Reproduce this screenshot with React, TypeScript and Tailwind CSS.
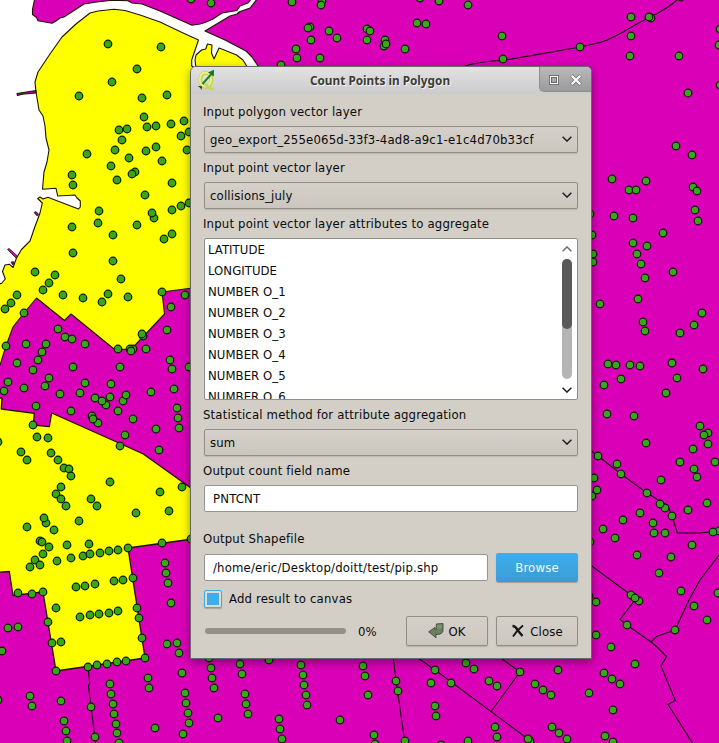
import React from "react";

type Point = [number, number];

const collisions: Point[] = [
  // north-west shore
  [108,44],[161,47],[137,69],[112,82],[79,96],[142,98],[167,95],[144,117],[119,130],[127,129],[147,127],[156,126],
  [171,124],[184,121],[189,132],[181,136],[122,140],[115,150],[146,151],[156,147],[187,150],[87,154],[129,158],
  [111,166],[162,161],[135,172],[132,174],[72,175],[73,185],[117,180],[172,183],[191,-1],
  [145,195],[99,211],[154,218],[152,213],[172,210],[189,203],[181,206],[98,223],[72,227],[137,225],[113,235],[172,234],
  [164,239],[73,253],[113,261],[35,272],[55,275],[49,283],[43,290],[121,279],[17,295],[11,303],[5,309],[63,295],
  [83,298],[108,294],[102,302],[128,297],[162,292],[185,295],[171,307],[24,313],[167,330],[58,329],[65,337],[72,339],
  [85,344],[143,336],[142,334],[118,349],[133,349],[130,349],[131,351],[146,349],[6,346],[26,344],[46,344],[42,352],
  [38,360],[17,363],[33,370],[73,367],[120,367],[170,360],[172,369],[189,367],
  // west
  [8,382],[4,391],[24,388],[49,378],[45,386],[60,394],[85,383],[80,393],[111,384],[110,397],[123,401],[126,395],
  [95,398],[106,405],[102,401],[118,411],[151,392],[174,389],[36,406],[71,411],[92,416],[98,423],[93,419],[133,419],
  [156,429],[177,408],[178,418],[179,428],[125,435],[120,446],[159,450],[33,425],[37,437],[48,438],[-2,442],[21,452],
  [27,460],[51,453],[58,460],[64,468],[69,469],[71,476],[56,494],[61,487],[61,499],[66,506],[110,482],[91,499],
  [97,506],[160,492],[182,487],[136,513],[169,511],[46,523],[44,518],[27,527],[54,530],[79,521],[40,541],[42,542],
  [49,547],[67,545],[89,544],[162,543],[191,539],
  // south-west
  [43,554],[35,560],[40,565],[30,567],[57,561],[71,558],[83,556],[90,554],[100,553],[109,551],[118,550],[128,548],
  [18,593],[32,594],[43,592],[76,587],[85,586],[95,584],[114,581],[123,580],[133,578],[165,563],[166,573],[168,583],
  [171,603],[56,608],[80,617],[90,615],[99,614],[109,613],[118,611],[137,608],[139,618],[142,638],[48,622],[8,628],
  [18,627],[2,651],[52,643],[61,642],[145,658],[56,671],[88,667],[97,665],[107,664],[117,662],[126,661],[167,644],
  [177,643],[179,653],[182,673],[110,684],[111,694],[113,704],[114,714],[116,724],[117,733],[119,743],[148,678],
  [149,688],[185,693],[186,703],[188,713],[189,723],[183,734],[155,728],[30,696],[32,706],[61,701],[64,721],[66,731],
  [67,741],[-2,700],[91,707],[95,737],
  // north
  [211,3],[292,2],[322,1],[321,5],[310,27],[308,28],[329,31],[337,38],[311,40],[296,49],[297,58],[320,58],[281,65],
  [367,29],[370,31],[367,40],[385,40],[384,46],[386,44],[405,49],[417,23],[426,24],[420,-2],[439,1],
  // north-east
  [468,5],[502,36],[503,59],[580,47],[631,17],[651,18],[649,17],[631,36],[630,56],[679,56],[681,-3],[720,29],
  [719,45],[688,93],[720,85],[676,146],[692,155],[612,179],[629,190],[636,190],[646,181],[693,187],[697,191],[695,210],
  // east
  [614,216],[633,218],[698,221],[663,233],[633,243],[647,246],[637,254],[641,264],[645,278],[673,272],[638,299],
  [600,304],[643,322],[645,331],[702,313],[694,325],[680,333],[608,364],[616,365],[630,365],[640,366],[621,379],
  [604,385],[672,363],[677,378],[703,369],[666,393],[607,414],[634,416],[700,426],[708,433],[704,435],[590,214],
  [592,235],[593,254],[593,262],
  // south-east
  [708,444],[693,449],[646,443],[598,456],[617,464],[621,474],[680,462],[715,462],[694,469],[697,477],[661,480],
  [594,478],[592,496],[597,490],[647,493],[665,508],[660,504],[672,516],[707,503],[688,510],[640,513],[623,520],
  [653,523],[603,529],[615,538],[654,533],[665,533],[719,531],[713,532],[692,545],[590,542],[637,555],[671,557],
  [659,573],[681,591],[718,593],[694,606],[707,620],[631,595],[639,601],[635,598],[589,596],[596,602],[627,625],
  [675,630],[596,635],[611,647],[635,664],[604,673],[612,679],[620,684],[589,693],[613,710],[605,736],[613,742],
  // south
  [209,658],[211,668],[212,678],[214,688],[240,664],[242,674],[245,694],[246,704],[248,714],[218,718],[269,660],
  [301,665],[303,675],[304,685],[306,695],[307,705],[279,719],[280,729],[282,739],[363,666],[365,676],[368,695],
  [340,720],[374,735],[375,744],[396,681],[398,691],[405,741],[435,670],[431,683],[451,683],[435,706],[436,716],
  [466,663],[474,669],[489,681],[497,686],[520,672],[558,670],[535,684],[543,690],[551,695],[495,727],[497,737],
  [530,741],[528,739],[552,727],[559,733],[567,739],[468,741],[441,745],
];

const water =
  "M-5,-5 L34.5,-5 L34.5,0 L32.5,9 L32.5,14.5 L36.5,17.5 L38,20.8 L52,23.2 L56,21 L60,18 L64,17 L84,4 L95,2.3 L112,0.3 L128,0.7 L132,3 L142,4 L160,11 L192,25.3 L200,24 L205,22.5 L213,19 L222,13 L237,10.5 L240,6 L248,3 L252,-2 L258,-2 L250,8 L239,12 L237,14 L230,16 L205,31 L225,40 L246,51 L252,57 L258,66 L258,72 L190,72 L100,210 L20,290 L-5,290 Z";

const shore =
  "M198.5,40 L182,32.5 L160,22 L140,15 L125,10.5 L114,9.2 L98,11 L90,13 L76,24 L62,37 L50,54 L38,72 L35,82 L36,92 L39,110 L43,116 L45,126 L46,138 L49,150 L47,162 L44,172 L42.5,189.3 L56,188.3 L57.7,196 L75,195 L77,198 L80.3,201 L80.3,207 L78.5,209 L55,200 L48,197.3 L43,199 L40,197 L37.7,198.5 L42.3,203 L40,213 L35,226.5 L30,241 L21.5,249.5 L16.5,258 L13,267.5 L9.5,264.3 L5,265 L2.5,271.5 L5.3,279 L1.5,283.5 L-5,284 L-5,370 L0,365 L6,346 L13,327 L24,313 L36.5,298 L64.5,320.5 L71,314 L114,349 L131,349.5 L164.5,314 L162,292 L200,287 L200,72 L191.7,66 L191.7,60 Z";

const inlet =
  "M196,68 L195,60 L196,55 L201.5,50 L205.7,49 L207.5,44 L212,45 L211.5,53 L214,59 L219,48 L223,49.5 L236.5,55 L243,60 L249,70 Z";

const southwest =
  "M-5,398 L2,398 L1.3,409 L34.3,413.3 L33.3,425 L49.3,426.7 L51.7,413 L120,443.5 L143.3,454 L200,494.5 L200,538 L128,548 L145,658 L56,671 L43,592 L13,595.5 L9.3,571.5 L-5,572.5 Z";

const boundaries = [
  "M88,667 L89.7,683 L88.5,686 L91,707 L95.7,743",
  "M393.3,658 L396,681 L405,743",
  "M418,658 L435,670 L528,739",
  "M502,659 L520,672 L491,711.5",
  "M585,446 L598,456 L621,474 L647,493 L668,506 L672,516 L677.3,533 L700,533 L719,531",
  "M585,561 L631,595 L635,600 L620,619.5 L627,625 L651,642 L657,647 L666.5,656.5 L661,666 L675.3,700.5 L668,704.5 L692.5,743",
  "M719,555 L700,580 L690,598 L675,630 L656.5,636.5 L651,642",
  "M462,67 Q480,61 503,60.5 L580,47 L600,42.5 Q610,40 635,25 L650,17 Q667,9 677,0",
];

function MapCanvas() {
  return (
    <svg className="block" width="719" height="743" viewBox="0 0 719 743">
      <rect width="719" height="743" fill="#da00b7" />
      <g stroke="#1a1500" strokeWidth="1.1" strokeLinejoin="round">
        <path d={water} fill="#fff" />
        <path d={shore} fill="#ff0" />
        <path d={inlet} fill="#ff0" />
        <path d={southwest} fill="#ff0" strokeWidth="1.3" />
        <path d="M17,93.5 L36,90.5 L36,93 L22,94.2 L17.5,95.5 Z" fill="#b4009a" />
        <path d="M7.5,249.5 L9,248.5 L17.5,256 L16,258 Z" fill="#da00b7" strokeWidth="0.8" />
        <path d="M34,212.5 L36,211.5 L39,214.5 L37,216 Z" fill="#90007a" strokeWidth="0.6" />
        <path d="M11,262 L13.5,261.5 L14.5,264 L12.5,265 Z" fill="#90007a" strokeWidth="0.6" />
      </g>
      <g fill="none" stroke="#19000f" strokeWidth="1.15">
        {boundaries.map((d) => (
          <path key={d} d={d} />
        ))}
      </g>
      <g fill="#38a81a" stroke="#0b1a05" strokeWidth="1.2">
        {collisions.map(([x, y]) => (
          <circle key={`${x},${y}`} cx={x} cy={y} r="3.8" />
        ))}
      </g>
    </svg>
  );
}

function Chevron({ up = false, color = "#1a1a1a" }: { up?: boolean; color?: string }) {
  return (
    <svg width="10" height="6" viewBox="0 0 10 6" fill="none" stroke={color} strokeWidth="1.4">
      <path d={up ? "M0.6,5.2 L5,0.9 L9.4,5.2" : "M0.6,0.8 L5,5.1 L9.4,0.8"} />
    </svg>
  );
}

function Label({ children }: { children: React.ReactNode }) {
  return <div className="-ml-[1px] flex h-[29px] items-center">{children}</div>;
}

function Combo({ value }: { value: string }) {
  return (
    <div className="flex h-[27px] w-[374px] items-center justify-between rounded-[2px] border border-[#918e86] bg-linear-to-b from-[#d5d0c9] to-[#cbc6be] pr-[5px] pl-[5px] shadow-[0_1px_1px_rgba(0,0,0,0.12)]">
      <span>{value}</span>
      <div className="pb-[2px]">
        <Chevron />
      </div>
    </div>
  );
}

function Logo() {
  return (
    <svg width="20" height="22" viewBox="0 0 20 22">
      <ellipse cx="8.8" cy="10.8" rx="5.6" ry="7" fill="#dfe3bd" stroke="#c3d052" strokeWidth="4" />
      <ellipse cx="8.4" cy="10.4" rx="5.6" ry="7" fill="none" stroke="#eaf08e" strokeWidth="2" />
      <path d="M8.5,14.5 Q11.5,20 16.5,20" fill="none" stroke="#c9d65a" strokeWidth="2.8" />
      <path d="M5.5,15 L14,5.5" stroke="#1c7f30" strokeWidth="1.9" />
      <path d="M17,0.8 L16.8,7.4 L11,3.4 Z" fill="#127426" />
      <path d="M0.6,17 L5,17.2 L4.5,21 L3.2,18.8 Z" fill="#12401c" />
    </svg>
  );
}

const attributes = [
  "LATITUDE", "LONGITUDE", "NUMBER O_1", "NUMBER O_2", "NUMBER O_3", "NUMBER O_4", "NUMBER O_5", "NUMBER O_6",
];

const pushButton =
  "flex h-[30px] items-center justify-center rounded-[2px] border border-[#918e86] bg-linear-to-b from-[#d5d0c9] to-[#cbc6be] shadow-[0_1px_1px_rgba(0,0,0,0.15)]";

function Dialog() {
  return (
    <div className="absolute top-[66px] left-[190px] flex h-[593px] w-[402px] flex-col overflow-hidden rounded-t-[6px] border border-[#66696c] bg-[#d3cfc7]">
      <div className="flex h-[27px] shrink-0 items-start bg-linear-to-b from-[#e2e2e2] to-[#cbcbcb]">
        <div className="w-[30px] pt-[2px] pl-[6px]">
          <Logo />
        </div>
        <div className="flex h-[27px] flex-1 items-center justify-center font-['Noto_Sans',sans-serif] text-[11.8px] font-bold text-[#3c3c3c] [text-shadow:1px_1px_0_#f4f4f4]">
          Count Points in Polygon
        </div>
        <div className="flex h-[25px] w-[52px] items-center gap-[11px] rounded-bl-[5px] border-b border-l border-[#8f8f8f] bg-linear-to-b from-[#b9b9b9] to-[#9b9b9b] pt-[2px] pl-[9px]">
          <svg width="10" height="10" viewBox="0 0 10 10" fill="none">
            <rect x="0.5" y="0.5" width="9" height="9" stroke="#666" strokeWidth="1" />
            <rect x="1.5" y="1.5" width="7" height="7" stroke="#fff" strokeWidth="1.2" />
            <rect x="2.5" y="2.5" width="5" height="5" stroke="#666" />
          </svg>
          <svg width="12" height="12" viewBox="0 0 12 12" fill="none">
            <path d="M1.5,1.5 L10.5,10.5 M10.5,1.5 L1.5,10.5" stroke="#6e6e6e" strokeWidth="3.6" />
            <path d="M1.7,1.7 L10.3,10.3 M10.3,1.7 L1.7,10.3" stroke="#fff" strokeWidth="2.1" />
          </svg>
        </div>
      </div>

      <div className="flex flex-col pt-[3px] pl-[13px] font-['DejaVu_Sans_Condensed','DejaVu_Sans',sans-serif] text-[13px] leading-[15px] tracking-[0.175px] whitespace-nowrap text-[#0a0a0a]">
        <Label>Input polygon vector layer</Label>
        <Combo value="geo_export_255e065d-33f3-4ad8-a9c1-e1c4d70b33cf" />
        <Label>Input point vector layer</Label>
        <Combo value="collisions_july" />
        <Label>Input point vector layer attributes to aggregate</Label>
        <div className="flex h-[162px] w-[374px] justify-between overflow-hidden rounded-[2px] border border-[#918e86] bg-white">
          <div className="pl-[3px] tracking-[0.05px]">
            {attributes.map((name) => (
              <div key={name} className="flex h-[21px] items-center">
                {name}
              </div>
            ))}
          </div>
          <div className="flex w-[20px] flex-col items-center pt-[7px]">
            <Chevron up color="#6a6a6a" />
            <div className="mt-[7px] h-[120px] w-[10px] rounded-full bg-[#b4b4b4]">
              <div className="h-[70px] rounded-full bg-[#595959]" />
            </div>
            <div className="mt-[8px]">
              <Chevron />
            </div>
          </div>
        </div>
        <Label>Statistical method for attribute aggregation</Label>
        <Combo value="sum" />
        <Label>Output count field name</Label>
        <div className="flex h-[27px] w-[374px] items-center rounded-[2px] border border-[#98958d] bg-white pl-[8px]">PNTCNT</div>
        <div className="pt-[12px] pb-[1px]">
          <Label>Output Shapefile</Label>
        </div>
        <div className="flex h-[27px] items-center gap-[8px]">
          <div className="flex h-[27px] w-[284px] items-center rounded-[2px] border border-[#98958d] bg-white pl-[8px]">
            /home/eric/Desktop/doitt/test/pip.shp
          </div>
          <div className="flex h-[29px] w-[82px] items-center justify-center rounded-[2px] bg-linear-to-b from-[#3daeee] to-[#3a9cd6] text-[#f2f8fc] shadow-[0_1px_1px_rgba(0,0,0,0.25)]">
            Browse
          </div>
        </div>
        <div className="flex h-[35px] items-center gap-[7px]">
          <div className="flex size-[18px] items-center justify-center rounded-[2px] border border-[#3daee9] bg-[#dedad4] shadow-[0_1px_1px_rgba(0,0,0,0.2)]">
            <div className="size-[12px] bg-[#3daee9]" />
          </div>
          <span>Add result to canvas</span>
        </div>
        <div className="flex h-[30px] items-center">
          <div className="ml-[1px] h-[6px] w-[141px] rounded-full bg-[#949189]" />
          <span className="ml-[12px] w-[48px]">0%</span>
          <div className={`${pushButton} w-[82px] gap-[4px]`}>
            <svg width="16" height="16" viewBox="0 0 16 16">
              <path d="M8.3,1 L15,0.5 V7.5 Q15,11.5 8,11.5 V14.8 L0.7,8.8 L7,4.4 V7 Q9,7 8.3,5 Z" fill="#6b8062" stroke="#3e4a38" strokeWidth="0.9" />
              <path d="M9,1.8 H14 V5 L9,6 Z" fill="#7f9175" />
            </svg>
            <span>OK</span>
          </div>
          <div className={`${pushButton} ml-[8px] w-[82px] gap-[5px]`}>
            <svg width="14" height="14" viewBox="0 0 14 14" fill="none" stroke="#171717">
              <path d="M1.5,2 Q4.5,2 6.5,6 L11.5,12" strokeWidth="2.4" />
              <path d="M12,1.5 Q6,6 2,12.5" strokeWidth="1.9" />
            </svg>
            <span>Close</span>
          </div>
        </div>
      </div>
    </div>
  );
}

export default function App() {
  return (
    <div className="relative h-[743px] w-[719px] overflow-hidden">
      <MapCanvas />
      <div className="absolute top-[66px] left-[190px] h-[593px] w-[402px] rounded-t-[6px] shadow-[0_3px_10px_rgba(0,0,0,0.4)]" />
      <Dialog />
    </div>
  );
}
